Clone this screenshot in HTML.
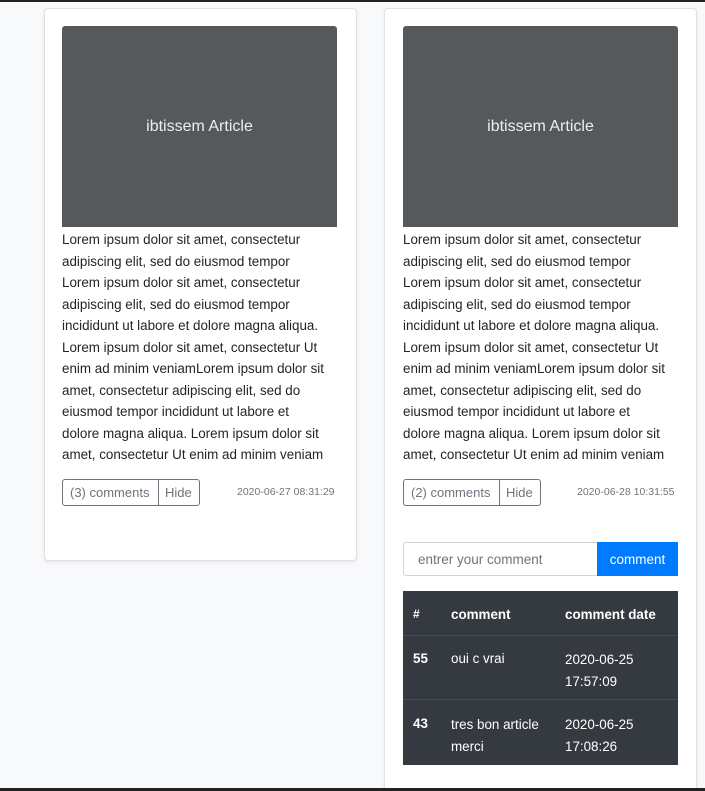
<!DOCTYPE html>
<html style="overflow:hidden;height:791px"><head><meta charset="utf-8"><style>
html,body{margin:0;width:705px;height:791px;overflow:hidden}
body{background:#f8f9fa;font-family:"Liberation Sans",sans-serif;position:relative;color:#212529}
.bar{position:absolute;left:0;width:705px;height:2px;background:#222}
.card{position:absolute;background:#fff;border:1px solid #dfe1e3;border-radius:4px;box-shadow:0 1px 3px rgba(0,0,0,.08)}
.img{position:absolute;background:#55595c;color:#eee;font-size:16px;display:flex;align-items:center;justify-content:center;border-radius:3px 3px 0 0}
.txt{position:absolute;font-size:13.4px;line-height:21.5px;white-space:nowrap}
.btns{position:absolute;display:flex;height:25px;border:1px solid #6c757d;border-radius:3px;font-size:13px;color:#6c757d}
.btns span{display:flex;align-items:center;padding:0 6px}
.btns span+span{border-left:1px solid #6c757d}
.date{position:absolute;font-size:10.5px;color:#6c757d}
</style></head><body>
<div class="bar" style="top:0"></div>
<div class="card" style="left:44px;top:8px;width:311px;height:551px"></div>
<div class="card" style="left:384px;top:8px;width:311px;height:790px"></div>

<div class="img" style="left:62px;top:26px;width:275px;height:201px">ibtissem Article</div>
<div class="img" style="left:403px;top:26px;width:275px;height:201px">ibtissem Article</div>

<div class="txt" style="left:62px;top:229px">Lorem ipsum dolor sit amet, consectetur<br>adipiscing elit, sed do eiusmod tempor<br>Lorem ipsum dolor sit amet, consectetur<br>adipiscing elit, sed do eiusmod tempor<br>incididunt ut labore et dolore magna aliqua.<br>Lorem ipsum dolor sit amet, consectetur Ut<br>enim ad minim veniamLorem ipsum dolor sit<br>amet, consectetur adipiscing elit, sed do<br>eiusmod tempor incididunt ut labore et<br>dolore magna aliqua. Lorem ipsum dolor sit<br>amet, consectetur Ut enim ad minim veniam</div>
<div class="txt" style="left:403px;top:229px">Lorem ipsum dolor sit amet, consectetur<br>adipiscing elit, sed do eiusmod tempor<br>Lorem ipsum dolor sit amet, consectetur<br>adipiscing elit, sed do eiusmod tempor<br>incididunt ut labore et dolore magna aliqua.<br>Lorem ipsum dolor sit amet, consectetur Ut<br>enim ad minim veniamLorem ipsum dolor sit<br>amet, consectetur adipiscing elit, sed do<br>eiusmod tempor incididunt ut labore et<br>dolore magna aliqua. Lorem ipsum dolor sit<br>amet, consectetur Ut enim ad minim veniam</div>

<div class="btns" style="left:62px;top:479px;width:136px"><span style="width:88px;padding:0 0 0 7px">(3) comments</span><span>Hide</span></div>
<div class="date" style="left:237px;top:486px">2020-06-27 08:31:29</div>
<div class="btns" style="left:403px;top:479px;width:136px"><span style="width:88px;padding:0 0 0 7px">(2) comments</span><span>Hide</span></div>
<div class="date" style="left:577px;top:486px">2020-06-28 10:31:55</div>

<div style="position:absolute;left:403px;top:542px;height:32px;border:1px solid #ced4da;border-radius:3px 0 0 3px;font-size:13.5px;color:#6c757d;line-height:34px;padding-left:14px;width:179px">entrer your comment</div>
<div style="position:absolute;left:597px;top:542px;width:81px;height:34px;background:#007bff;color:#fff;font-size:13.5px;line-height:36px;text-align:center">comment</div>

<div style="position:absolute;left:403px;top:591px;width:275px;height:174px;background:#343a40;color:#fff;font-size:13.4px">
 <div style="position:absolute;top:0;left:0;width:275px;height:44px;border-bottom:1px solid #454d55"></div>
 <div style="position:absolute;top:108px;left:0;width:275px;height:1px;background:#454d55"></div>
 <b style="position:absolute;left:10px;top:16px;font-size:12px">#</b>
 <b style="position:absolute;left:48px;top:16px">comment</b>
 <b style="position:absolute;left:162px;top:16px">comment date</b>
 <b style="position:absolute;left:10px;top:60px">55</b>
 <div style="position:absolute;left:48px;top:60px">oui c vrai</div>
 <div style="position:absolute;left:162px;top:58px;line-height:21.5px">2020-06-25<br>17:57:09</div>
 <b style="position:absolute;left:10px;top:125px">43</b>
 <div style="position:absolute;left:48px;top:123px;line-height:21.5px">tres bon article<br>merci</div>
 <div style="position:absolute;left:162px;top:123px;line-height:21.5px">2020-06-25<br>17:08:26</div>
</div>
<div class="bar" style="top:788px;height:3px"></div>
</body></html>
